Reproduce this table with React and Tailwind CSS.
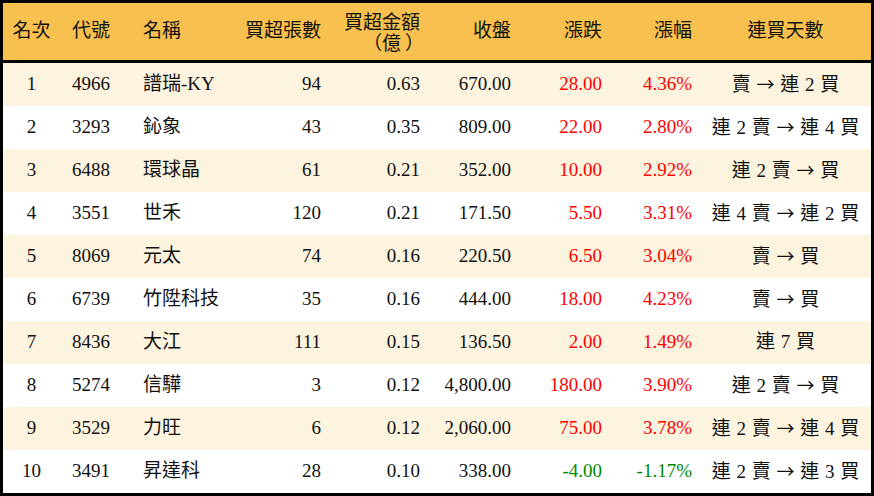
const rows = [
    ["1", "4966", "譜瑞-KY", "94", "0.63", "670.00", "28.00", "4.36%", "賣 → 連 2 買"],
    ["2", "3293", "鈊象", "43", "0.35", "809.00", "22.00", "2.80%", "連 2 賣 → 連 4 買"],
    ["3", "6488", "環球晶", "61", "0.21", "352.00", "10.00", "2.92%", "連 2 賣 → 買"],
    ["4", "3551", "世禾", "120", "0.21", "171.50", "5.50", "3.31%", "連 4 賣 → 連 2 買"],
    ["5", "8069", "元太", "74", "0.16", "220.50", "6.50", "3.04%", "賣 → 買"],
    ["6", "6739", "竹陞科技", "35", "0.16", "444.00", "18.00", "4.23%", "賣 → 買"],
    ["7", "8436", "大江", "111", "0.15", "136.50", "2.00", "1.49%", "連 7 買"],
    ["8", "5274", "信驊", "3", "0.12", "4,800.00", "180.00", "3.90%", "連 2 賣 → 買"],
    ["9", "3529", "力旺", "6", "0.12", "2,060.00", "75.00", "3.78%", "連 2 賣 → 連 4 買"],
    ["10", "3491", "昇達科", "28", "0.10", "338.00", "-4.00", "-1.17%", "連 2 賣 → 連 3 買"],
];

const cols = "grid grid-cols-[57px_75px_85px_110px_100px_90px_90px_90px_1fr]";

// the arrow is drawn full width, as in a CJK font
const Streak = ({text}) => {
    const parts = text.split("→");
    return (
        <span className="text-center whitespace-nowrap [word-spacing:1px]">
            {parts[0]}
            {parts.length > 1 && <span className="font-['Noto_Sans_CJK_TC'] text-[18px]">→</span>}
            {parts[1]}
        </span>
    );
};

const App = () => {
    return (
        <div
            className="w-[874px] h-[496px] border-[3px] border-black bg-white text-[19px] text-[#111]"
            style={{fontFamily: '"Liberation Serif", "Noto Sans CJK TC", serif'}}
        >
            <div className={`${cols} h-[60px] bg-[#f8c04e] border-b-[3px] border-black items-center`}>
                <span className="text-center">名次</span>
                <span className="pl-[12px]">代號</span>
                <span className="pl-[8px]">名稱</span>
                <span className="text-right pr-[9px]">買超張數</span>
                <span className="text-right pr-[10px] leading-[21px] pt-[3px]">
                    買超金額<br/>
                    <span className="inline-block w-[19px] text-right">（</span>億<span className="inline-block w-[19px] text-left pl-[4px]">）</span>
                </span>
                <span className="text-right pr-[9px]">收盤</span>
                <span className="text-right pr-[8px]">漲跌</span>
                <span className="text-right pr-[8px]">漲幅</span>
                <span className="text-center">連買天數</span>
            </div>
            {rows.map((r, i) => {
                const down = r[6].startsWith("-");
                const color = down ? "text-[#008a00]" : "text-[#ff0000]";
                return (
                    <div key={r[0]} className={`${cols} h-[43px] items-center ${i % 2 === 0 ? "bg-[#fdf4df]" : "bg-white"}`}>
                        <span className="text-center">{r[0]}</span>
                        <span className="pl-[12px]">{r[1]}</span>
                        <span className="pl-[8px] whitespace-nowrap">{r[2]}</span>
                        <span className="text-right pr-[9px]">{r[3]}</span>
                        <span className="text-right pr-[10px]">{r[4]}</span>
                        <span className="text-right pr-[9px]">{r[5]}</span>
                        <span className={`text-right pr-[8px] ${color}`}>{r[6]}</span>
                        <span className={`text-right pr-[8px] ${color}`}>{r[7]}</span>
                        <Streak text={r[8]}/>
                    </div>
                );
            })}
        </div>
    );
};

export default App;
